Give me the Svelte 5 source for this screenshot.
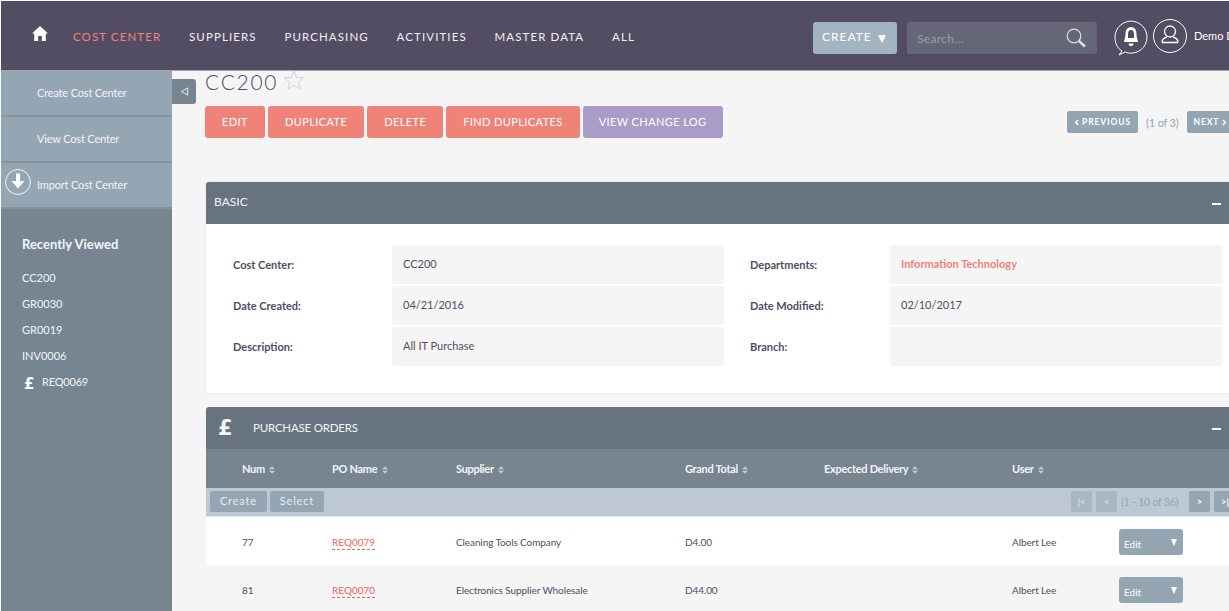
<script>
  const nav = ['SUPPLIERS', 'PURCHASING', 'ACTIVITIES', 'MASTER DATA', 'ALL'];
  const actions = ['Create Cost Center', 'View Cost Center', 'Import Cost Center'];
  const recent = ['CC200', 'GR0030', 'GR0019', 'INV0006'];
  const btns = ['EDIT', 'DUPLICATE', 'DELETE', 'FIND DUPLICATES'];
  const cols = ['Num', 'PO Name', 'Supplier', 'Grand Total', 'Expected Delivery', 'User'];
  const rows = [
    { num: '77', name: 'REQ0079', supplier: 'Cleaning Tools Company', total: 'D4.00', user: 'Albert Lee' },
    { num: '81', name: 'REQ0070', supplier: 'Electronics Supplier Wholesale', total: 'D44.00', user: 'Albert Lee' }
  ];
</script>

<div class="page">
  <header class="nav">
    <svg class="home" viewBox="0 0 16 15" width="16" height="15"><path d="M8 0 L16 7.5 H13.8 V15 H9.8 V10 H6.2 V15 H2.2 V7.5 H0 Z" fill="#fff"/></svg>
    <a class="nav-item active" href="#a">COST CENTER</a>
    {#each nav as n}<a class="nav-item" href="#a">{n}</a>{/each}
    <div class="nav-right">
      <button class="create">CREATE <span class="tri"></span></button>
      <div class="search">
        <span>Search...</span>
        <svg viewBox="0 0 20 20" width="20" height="20"><circle cx="8" cy="8" r="6.8" fill="none" stroke="#dfe2e8" stroke-width="1.2"/><path d="M13 13 L19 18.5" stroke="#dfe2e8" stroke-width="2.4"/></svg>
      </div>
      <svg class="bell" viewBox="0 0 34 36" width="34" height="36">
        <path d="M8 31 C3 28 1 23 1 17 A16 16 0 1 1 11 32 L5 35 Z" fill="none" stroke="#fff" stroke-width="1"/>
        <path d="M17 7 C12.500 7 11.500 11 11.500 14 C11.500 18 10 20 10 22 H24 C24 20 22.500 18 22.500 14 C22.500 11 21.500 7 17 7 Z M14.500 23.500 H19.500 C19.500 27 14.500 27 14.500 23.500 Z" fill="#fff"/>
        <path d="M14 14 C14 11.500 15 10 17 10 C19 10 20 11.500 20 14 V18 H14 Z" fill="#534d64"/>
      </svg>
      <svg class="user" viewBox="0 0 34 34" width="34" height="34">
        <circle cx="17" cy="17" r="16.500" fill="none" stroke="#fff" stroke-width="1"/>
        <circle cx="17" cy="12.500" r="5.500" fill="none" stroke="#fff" stroke-width="1.300"/>
        <path d="M9 23.500 C9 20 12 18.500 14 18 M25 23.500 C25 20 22 18.500 20 18 M9 23.500 H25" fill="none" stroke="#fff" stroke-width="1.300"/>
      </svg>
      <span class="uname">Demo D</span>
    </div>
  </header>

  <div class="body">
    <aside class="side">
      <div class="actions">
        {#each actions as a, i}
          <a class="action" href="#a">
            {#if i === 2}
              <svg class="import" viewBox="0 0 26 26" width="26" height="26">
                <circle cx="13" cy="13" r="12.400" fill="none" stroke="#fff" stroke-width="0.900"/>
                <path d="M11 4.500 H15 V12 H19.500 L13 19.500 L6.500 12 H11 Z" fill="#fff"/>
              </svg>
            {/if}
            {a}
          </a>
        {/each}
      </div>
      <h3>Recently Viewed</h3>
      <ul>
        {#each recent as r}<li>{r}</li>{/each}
        <li class="pound"><b>£</b>REQ0069</li>
      </ul>
    </aside>

    <main class="main">
      <div class="toggle">
        <svg viewBox="0 0 10 10" width="9" height="9"><path d="M8.500 1 V9 L1.500 5 Z" fill="none" stroke="#e9edf0" stroke-width="1.100"/></svg>
      </div>
      <div class="title">
        <h1>CC200</h1>
        <svg viewBox="0 0 24 23" width="22" height="20"><path d="M12 1 L15 8.500 L23 9 L17 14 L19 22 L12 17.700 L5 22 L7 14 L1 9 L9 8.500 Z" fill="none" stroke="#c8ced6" stroke-width="1"/></svg>
      </div>
      <div class="toolbar">
        {#each btns as b}<button class="btn">{b}</button>{/each}
        <button class="btn log">VIEW CHANGE LOG</button>
        <div class="pager">
          <button class="pg"><svg viewBox="0 0 6 8" width="5" height="7"><path d="M5 1 L2 4 L5 7" fill="none" stroke="#fff" stroke-width="1.800"/></svg>PREVIOUS</button>
          <span>(1 of 3)</span>
          <button class="pg">NEXT<svg viewBox="0 0 6 8" width="5" height="7"><path d="M1 1 L4 4 L1 7" fill="none" stroke="#fff" stroke-width="1.800"/></svg></button>
        </div>
      </div>

      <section class="panel basic">
        <div class="phead">BASIC<span class="minus"></span></div>
        <div class="fields">
          <label for="x">Cost Center:</label><div class="val">CC200</div>
          <label for="x">Departments:</label><div class="val link">Information Technology</div>
          <label for="x">Date Created:</label><div class="val">04/21/2016</div>
          <label for="x">Date Modified:</label><div class="val">02/10/2017</div>
          <label for="x">Description:</label><div class="val">All IT Purchase</div>
          <label for="x">Branch:</label><div class="val"></div>
        </div>
      </section>

      <section class="panel">
        <div class="phead po"><b class="pnd">£</b>PURCHASE ORDERS<span class="minus"></span></div>
        <div class="grid thead">
          {#each cols as c}
            <div>{c} <svg viewBox="0 0 7 9" width="6" height="8"><path d="M3.500 0 L7 3.500 H0 Z M3.500 9 L0 5.500 H7 Z" fill="#c3ccd3"/></svg></div>
          {/each}
        </div>
        <div class="tbar">
          <button class="tb">Create</button>
          <button class="tb">Select</button>
          <div class="tpager">
            <button class="sq dim">|&lt;</button>
            <button class="sq dim">&lt;</button>
            <span>(1 - 10 of 36)</span>
            <button class="sq">&gt;</button>
            <button class="sq last">&gt;|</button>
          </div>
        </div>
        {#each rows as r, i}
          <div class="grid row" class:alt={i === 1}>
            <div>{r.num}</div>
            <div><a href="#a">{r.name}</a></div>
            <div>{r.supplier}</div>
            <div>{r.total}</div>
            <div></div>
            <div>{r.user}</div>
            <div><button class="edit">Edit<span class="tri"></span></button></div>
          </div>
        {/each}
      </section>
    </main>
  </div>
</div>

<style>
  :global(body) { margin: 0; background: #fff; }
  * { box-sizing: border-box; }
  button { font-family: inherit; border: 0; cursor: pointer; }
  a { text-decoration: none; color: inherit; }
  .page {
    width: 1229px; height: 611px; overflow: hidden; padding: 1px 0 0 1px;
    font-family: Lato, "Open Sans", sans-serif; color: #534d64;
    display: flex; flex-direction: column;
  }
  .nav {
    height: 70px; flex: none; background: #534d64; display: flex; align-items: center;
    padding-left: 31px; border-bottom: 1px solid #a5a5b0; white-space: nowrap;
  }
  .home { margin-right: 25px; margin-top: -5px; }
  .nav-item { font-size: 11.500px; letter-spacing: 1.100px; color: #eff0f3; margin-right: 27.800px; margin-top: 2px; }
  .nav-item.active { color: #f08377; }
  .nav-right { position: absolute; left: 813px; top: 19px; display: flex; align-items: flex-start; width: 416px; overflow: hidden; }
  .create {
    width: 84px; height: 32px; flex: none; margin-top: 3px; background: #a3b4c1; color: #fff; border-radius: 3px;
    font-size: 12px; letter-spacing: 1px; text-align: left; padding: 0 0 3px 9px;
  }
  .tri { display: inline-block; width: 0; height: 0; border: 4.500px solid transparent; border-top: 8px solid #fff; border-bottom: 0; vertical-align: -2px; margin-left: 2px; }
  .search {
    width: 190px; height: 32px; flex: none; margin: 3px 0 0 10px; background: #656779; border-radius: 2px;
    display: flex; align-items: center; justify-content: space-between; padding: 0 11px 0 10px;
    color: #9b9dab; font-size: 12px; letter-spacing: 0.300px;
  }
  .bell { margin: 1px 0 0 17px; flex: none; }
  .user { margin: 0 0 0 5px; flex: none; }
  .uname { color: #fff; font-size: 11px; margin-left: 7px; margin-top: 10px; flex: none; }

  .body { flex: 1; display: flex; min-height: 0; }
  .side { width: 171px; flex: none; background: #778591; color: #f2f4f6; }
  .action {
    display: flex; align-items: center; height: 46px; background: #94a5b4; border-bottom: 2px solid #83939f;
    padding: 0 0 2px 36px; font-size: 11px; letter-spacing: -0.170px; position: relative;
  }
  .import { position: absolute; left: 4px; top: 6px; }
  .side h3 { margin: 27px 0 0 21px; font-size: 13px; font-weight: 700; }
  .side ul { list-style: none; margin: 18px 0 0 21px; padding: 0; font-size: 11px; }
  .side li { height: 26px; line-height: 16px; }
  .pound { display: flex; align-items: flex-start; letter-spacing: -0.200px; }
  .pound b { font-size: 15px; width: 20px; padding-left: 2px; line-height: 20px; font-family: "DejaVu Sans", sans-serif; color: #fff; }

  .main { flex: 1; min-width: 0; background: #f5f5f5; padding-left: 33px; position: relative; overflow: hidden; }
  .toggle {
    position: absolute; left: 0; top: 8px; width: 24px; height: 25px; background: #778591;
    border-radius: 0 3px 3px 0; display: flex; align-items: center; justify-content: center;
  }
  .title { display: flex; align-items: flex-start; height: 35px; }
  .title h1 { margin: 0; font-weight: 300; font-size: 21px; line-height: 22px; letter-spacing: 1.700px; color: #534d64; }
  .title svg { margin: -1px 0 0 5px; }
  .toolbar { display: flex; align-items: center; height: 32px; gap: 3px; margin-right: -40px; white-space: nowrap; }
  .btn {
    height: 32px; padding: 0 17px 1px; background: #f08377; color: #fff; border-radius: 3px;
    font-size: 11px; letter-spacing: 0.400px;
  }
  .btn.log { background: #a99cc9; padding: 0 16px 1px; }
  .pager { position: absolute; left: 895px; top: 40px; display: flex; align-items: center; gap: 8px; color: #94a5b4; font-size: 11px; letter-spacing: -0.200px; width: 170px; }
  .pg { height: 22px; flex: none; background: #94a5b4; color: #fff; border-radius: 2px; font-size: 8.500px; font-weight: 700; letter-spacing: 0.900px; padding: 0 7px; display: flex; align-items: center; gap: 3px; }
  .panel { margin: 0 -40px 0 1px; border-radius: 3px 3px 0 0; overflow: hidden; background: #fff; }
  .basic { margin-top: 44px; height: 211px; border-radius: 3px; box-shadow: 0 0 2px #ddd; margin-bottom: 14px; }
  .phead {
    height: 42px; background: #677380; color: #f3f4f6; font-size: 12px; display: flex; align-items: center;
    padding: 0 0 4px 8px; position: relative;
  }
  .po { padding: 0 0 2px 47px; font-size: 11.500px; letter-spacing: -0.200px; }
  .pnd { position: absolute; left: 12px; top: 7px; font-size: 21px; line-height: 28px; font-family: "DejaVu Sans", sans-serif; }
  .minus { position: absolute; left: 1006px; top: 21px; width: 9px; height: 2px; background: #fff; }
  .fields {
    display: grid; grid-template-columns: 159px 332px 26px 140px 332px; grid-auto-rows: 39px; row-gap: 2px;
    padding: 21px 0 0 27px; font-size: 11px;
  }
  .fields label { font-weight: 700; display: flex; align-items: center; color: #534d64; }
  .fields label:nth-of-type(even) { grid-column: 4; }
  .val { background: #f5f5f5; display: flex; align-items: center; padding: 0 0 2px 11px; border-radius: 2px; }
  .val.link { color: #f08377; font-weight: 700; }

  .grid { display: grid; grid-template-columns: 90px 124px 229px 139px 188px 107px 120px; padding-left: 36px; align-items: center; font-size: 10px; }
  .thead { height: 39px; background: #778591; color: #f3f4f6; font-size: 11px; font-weight: 700; letter-spacing: -0.300px; }
  .thead svg { margin-left: 2px; vertical-align: -1px; }
  .tbar { height: 29px; background: #bdc8d2; display: flex; align-items: flex-start; padding: 3px 0 0 4px; gap: 3px; position: relative; border-bottom: 1px solid #e3e7ea; }
  .tb { height: 21px; padding: 0 10px 2px; background: #94a5b4; color: #e8ecef; border-radius: 2px; font-size: 11px; letter-spacing: 0.800px; }
  .tpager { position: absolute; left: 865px; top: 3px; display: flex; align-items: center; gap: 4px; width: 170px; color: #94a5b4; font-size: 10.500px; letter-spacing: -0.200px; white-space: nowrap; }
  .tpager span { margin: 0 7px 0 0; }
  .sq { width: 21px; height: 21px; flex: none; padding: 0; background: #94a5b4; color: #fff; border-radius: 2px; font-size: 9px; font-weight: 700; text-align: center; }
  .sq.last { padding-left: 7px; text-align: left; }
  .sq.dim { background: #a9b7c3; color: #d9e0e5; }
  .row { height: 48px; background: #fff; color: #534d64; letter-spacing: -0.100px; padding-top: 1px; }
  .row.alt { background: #f5f5f5; }
  .row a { color: #ee665a; border-bottom: 1px dashed #ee665a; padding-bottom: 1px; letter-spacing: 0; }
  .edit {
    width: 64px; height: 26px; background: #94a5b4; color: #fff; border-radius: 3px; font-size: 10px;
    display: flex; align-items: center; justify-content: space-between; padding: 4px 6px 0 5px;
  }
  .edit .tri { margin-top: -3px; border-width: 3.500px; border-top-width: 7px; border-bottom: 0; }
</style>
